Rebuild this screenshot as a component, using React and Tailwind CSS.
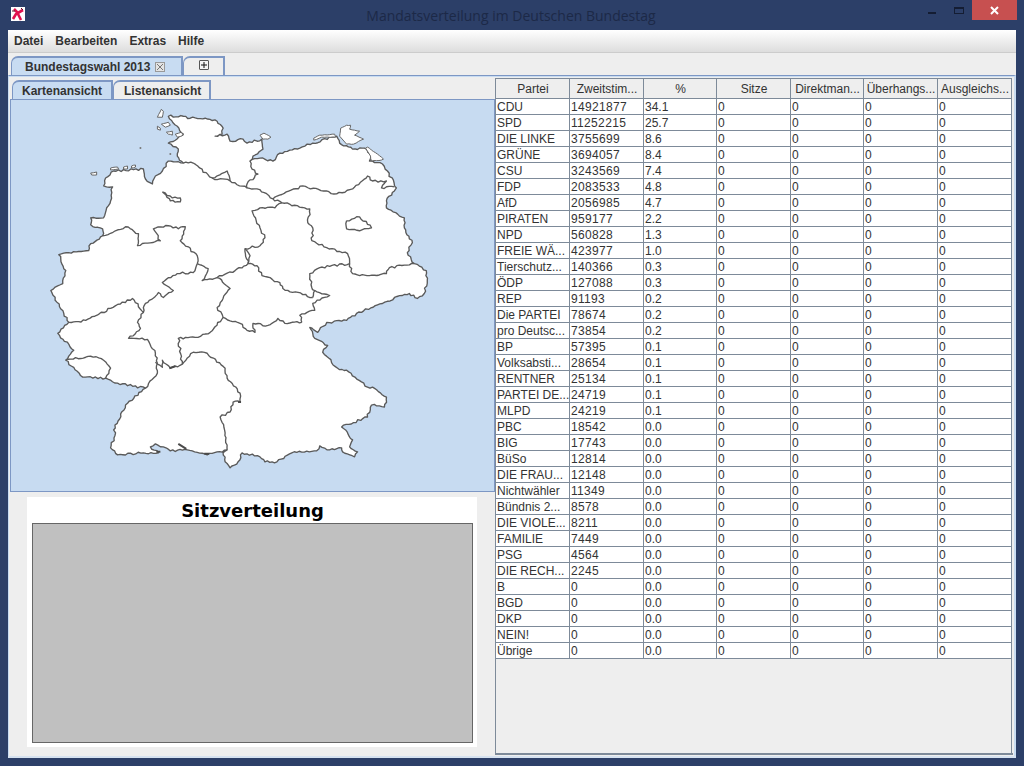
import React from "react";

const rows = [
  ["CDU","14921877","34.1"],["SPD","11252215","25.7"],["DIE LINKE","3755699","8.6"],["GRÜNE","3694057","8.4"],["CSU","3243569","7.4"],["FDP","2083533","4.8"],["AfD","2056985","4.7"],["PIRATEN","959177","2.2"],["NPD","560828","1.3"],["FREIE WÄ...","423977","1.0"],["Tierschutz...","140366","0.3"],["ÖDP","127088","0.3"],["REP","91193","0.2"],["Die PARTEI","78674","0.2"],["pro Deutsc...","73854","0.2"],["BP","57395","0.1"],["Volksabsti...","28654","0.1"],["RENTNER","25134","0.1"],["PARTEI DE...","24719","0.1"],["MLPD","24219","0.1"],["PBC","18542","0.0"],["BIG","17743","0.0"],["BüSo","12814","0.0"],["DIE FRAU...","12148","0.0"],["Nichtwähler","11349","0.0"],["Bündnis 2...","8578","0.0"],["DIE VIOLE...","8211","0.0"],["FAMILIE","7449","0.0"],["PSG","4564","0.0"],["DIE RECH...","2245","0.0"],["B","0","0.0"],["BGD","0","0.0"],["DKP","0","0.0"],["NEIN!","0","0.0"],["Übrige","0","0.0"],
];
const headers = ["Partei","Zweitstim...","%","Sitze","Direktman...","Überhangs...","Ausgleichs..."];
const GRID = "grid grid-cols-[74px_74px_73px_74px_73px_74px_74px]";

const outer = [[168,115],[183,115],[190,117],[205,117],[217,120],[223,127],[222,133],[215,135],[227,133],[230,140],[243,138],[247,142],[262,138],[263,148],[253,155],[250,160],[260,157],[273,160],[280,152],[300,147],[313,142],[337,135],[340,142],[353,148],[365,147],[372,155],[370,160],[383,163],[388,170],[397,187],[395,190],[387,200],[387,207],[405,217],[405,227],[413,242],[408,252],[415,263],[427,270],[428,280],[425,293],[418,298],[410,293],[403,295],[383,303],[357,313],[347,320],[327,322],[318,332],[310,327],[315,338],[328,345],[323,352],[338,368],[347,370],[368,387],[373,387],[387,397],[385,407],[372,405],[368,417],[342,427],[353,440],[350,447],[358,452],[355,457],[343,452],[342,448],[330,450],[320,446],[317,451],[292,453],[277,462],[265,462],[260,457],[247,454],[242,453],[238,462],[230,468],[225,462],[223,453],[227,450],[207,455],[187,450],[170,451],[163,447],[155,444],[150,447],[158,453],[143,453],[117,455],[110,448],[115,433],[113,430],[125,405],[145,388],[117,383],[105,378],[82,377],[65,360],[73,350],[57,333],[68,322],[63,313],[50,290],[62,283],[65,270],[58,254],[88,250],[90,243],[102,235],[102,228],[90,224],[90,217],[103,217],[110,200],[112,186],[103,185],[105,177],[113,170],[143,168],[145,178],[152,183],[155,175],[162,170],[168,160],[183,162],[177,155],[178,148],[168,142],[183,133],[177,125],[168,115]];

const inner = [
  [[183,162],[193,162],[212,177],[230,180],[247,187],[257,188],[273,198],[282,202]],
  [[212,177],[227,170],[230,180]],
  [[250,160],[252,168],[258,173],[247,183],[247,187]],
  [[273,198],[303,185],[337,193],[353,188],[368,175],[373,180],[387,180],[382,187],[395,186]],
  [[282,202],[275,207],[260,207],[252,210],[260,227],[265,237],[260,245],[245,248],[248,263],[257,265],[262,275],[280,282],[283,288],[313,297]],
  [[282,202],[310,208],[308,222],[313,227],[312,240],[327,247],[348,253],[350,263],[320,267],[310,273],[312,287],[315,290],[313,297]],
  [[350,263],[353,273],[370,275],[387,273],[390,267],[415,263]],
  [[315,290],[330,295],[313,303],[315,310],[300,315],[302,322]],
  [[248,263],[235,270],[217,277],[230,288],[222,300],[217,307],[223,317],[240,323],[247,330],[255,332],[253,323],[268,325],[278,318],[285,323],[302,322]],
  [[245,248],[250,255],[248,263]],
  [[197,263],[208,268],[202,280],[217,277]],
  [[102,235],[125,226],[138,233],[137,245],[160,240],[153,228],[168,225],[178,228],[185,226],[180,240],[197,255],[197,263],[193,272],[177,273],[162,282],[173,290],[163,297],[158,292],[145,303],[143,312],[132,298],[110,308],[85,320],[68,322]],
  [[143,312],[137,322],[140,328],[128,338],[147,339],[155,353],[157,363],[157,373],[145,388]],
  [[155,362],[162,367],[162,360],[170,368],[182,364],[178,338],[195,337],[210,332],[223,317]],
  [[182,364],[193,352],[207,353],[225,368],[227,378],[240,393],[240,402],[233,402],[230,412],[220,417],[225,433],[227,450]],
  [[65,360],[90,356],[103,360],[110,368],[105,378]],
  [[162,191],[172,197],[180,197],[180,201],[170,200],[162,191]],
  [[347,220],[360,216],[372,227],[360,230],[347,228],[347,220]],
];

const islands = [
  [[157,116],[161,108],[163,110],[162,116]],
  [[161,123],[168,121],[170,124],[165,126]],
  [[157,125],[160,127],[160,129],[157,128]],
  [[166,131],[172,130],[172,134],[168,133]],
  [[175,133],[181,131],[183,134],[177,136]],
  [[90,172],[96,171],[96,174],[91,174]],
  [[110,167],[117,166],[118,168],[110,169]],
  [[123,166],[127,165],[127,168],[123,168]],
  [[131,165],[135,164],[135,166],[131,167]],
  [[260,134],[264,132],[271,136],[268,138],[263,138]],
  [[314,137],[320,134],[335,133],[336,136],[322,136],[314,139]],
  [[340,135],[341,127],[347,124],[351,124],[350,128],[360,130],[355,134],[364,138],[354,143],[347,143]],
  [[366,147],[368,146],[378,153],[384,158],[382,159],[372,160],[371,155]],
];

function jag(points, amp = 1.15, step = 2.6) {
  const out = [];
  for (let i = 0; i < points.length - 1; i++) {
    const [x1, y1] = points[i];
    const [x2, y2] = points[i + 1];
    const len = Math.hypot(x2 - x1, y2 - y1);
    const n = Math.max(1, Math.round(len / step));
    const nx = -(y2 - y1) / (len || 1);
    const ny = (x2 - x1) / (len || 1);
    out.push([x1, y1]);
    for (let k = 1; k < n; k++) {
      const t = k / n;
      const s = Math.sin((x1 + t * (x2 - x1)) * 12.9898 + (y1 + t * (y2 - y1)) * 78.233) * 43758.5453;
      const d = ((s - Math.floor(s)) - 0.5) * 2 * amp;
      out.push([x1 + t * (x2 - x1) + nx * d, y1 + t * (y2 - y1) + ny * d]);
    }
  }
  out.push(points[points.length - 1]);
  return out.map((p) => p[0].toFixed(1) + " " + p[1].toFixed(1)).join(" L");
}

function GermanyMap() {
  return (
    <svg viewBox="10 99 485 392" className="block w-full h-full">
      <path d={"M" + jag(outer) + "Z"} fill="#ffffff" stroke="#5a5a5a" strokeWidth="1.35" strokeLinejoin="round" />
      {inner.map((s, i) => (
        <path key={i} d={"M" + jag(s)} fill="none" stroke="#5a5a5a" strokeWidth="1.35" strokeLinejoin="round" />
      ))}
      {islands.map((s, i) => (
        <path key={i} d={"M" + jag(s, 0.3) + "Z"} fill="#ffffff" stroke="#666666" strokeWidth="1" />
      ))}
      <path d="M169 368 L175 366 M156 452 L160 452 M204 454 L209 454 M178 444 L186 449 M238 402 L241 402" stroke="#4a4a4a" strokeWidth="2" fill="none" />
      <circle cx="140" cy="147" r="1" fill="#777777" />
      <circle cx="170" cy="153" r="1" fill="#777777" />
    </svg>
  );
}

function AppIcon() {
  return (
    <svg width="14" height="14" viewBox="0 0 14 14" className="block">
      <rect width="14" height="14" fill="#ffffff" />
      <path d="M3 2 L6 5 L10 13 M2 12 L5 7 L12 3" stroke="#e0114f" strokeWidth="2.6" fill="none" />
      <path d="M1 4 L4 4 M10 1 L12 3" stroke="#5a1a2a" strokeWidth="1" fill="none" />
    </svg>
  );
}

function Tab({ children, active, className }) {
  return (
    <div
      className={
        "flex items-center border-t-2 border-r-2 border-l border-[#7d97c4] rounded-tl-[7px] " +
        (active ? "bg-[#c8dcf2] " : "bg-[#eeeeee] ") +
        className
      }
    >
      {children}
    </div>
  );
}

export default function App() {
  return (
    <div className="w-[1024px] h-[766px] overflow-hidden flex flex-col bg-[#2c3f68] text-[12px] text-[#333333] font-['Liberation_Sans',Arial,sans-serif]">
      {/* title bar */}
      <div className="h-[30px] relative shrink-0 flex justify-center">
        <div className="absolute left-[11px] top-[7px]"><AppIcon /></div>
        <div className="pt-[6px] pr-[2px] text-[14px] leading-[20px] text-[#1c2947] font-['Open_Sans',sans-serif]">Mandatsverteilung im Deutschen Bundestag</div>
        <div className="absolute left-[928px] top-[12px] w-[8px] h-[2px] bg-[#141d33]" />
        <div className="absolute left-[954px] top-[7px] w-[10px] h-[7px] border border-t-2 border-[#141d33]" />
        <div className="absolute left-[972px] top-0 w-[45px] h-[20px] bg-[#c75050] flex items-center justify-center">
          <svg width="9" height="9" viewBox="0 0 9 9"><path d="M1 1 L8 8 M8 1 L1 8" stroke="#ffffff" strokeWidth="2" /></svg>
        </div>
      </div>

      {/* window body */}
      <div className="mx-[8px] h-[728px] bg-[#eeeeee] flex flex-col border-b-2 border-[#d6e2f0]">
        {/* menu */}
        <div className="h-[23px] shrink-0 flex items-center gap-[12px] pl-[6px] font-bold bg-gradient-to-b from-[#ffffff] to-[#dddddd] border-b border-[#cccccc]">
          <span>Datei</span><span>Bearbeiten</span><span>Extras</span><span>Hilfe</span>
        </div>
        {/* outer tabs */}
        <div className="h-[21px] shrink-0 flex items-end pl-[3px] mt-[1px]">
          <Tab active className="w-[172px] h-[19px] pl-[13px] gap-[5px] font-bold">
            <span>Bundestagswahl 2013</span>
            <span className="w-[10px] h-[10px] border border-[#999999] bg-[#e4e4e4] flex items-center justify-center">
              <svg width="8" height="8" viewBox="0 0 8 8"><path d="M1 1 L7 7 M7 1 L1 7" stroke="#777777" strokeWidth="1" /></svg>
            </span>
          </Tab>
          <Tab className="w-[42px] h-[19px] pl-[15px] pb-[3px]">
            <span className="w-[10px] h-[10px] border border-[#555555] bg-[#f4f4f4] rounded-[1px] flex items-center justify-center">
              <svg width="8" height="8" viewBox="0 0 8 8"><path d="M4 1 V7 M1 4 H7" stroke="#111111" strokeWidth="1" /></svg>
            </span>
          </Tab>
        </div>
        {/* tab content */}
        <div className="flex-1 flex border-t border-[#7d97c4] border-l border-r-2 border-l-[#c8dcf2] border-r-[#c8dcf2] pt-[1px] min-h-0 bg-[#eeeeee] relative">
          <div className="absolute left-0 right-0 top-0 h-[1px] bg-[#c8dcf2]" />
          {/* left pane */}
          <div className="w-[486px] shrink-0 flex flex-col pl-[1px]">
            <div className="h-[22px] shrink-0 flex items-end pl-[2px] pt-[3px] font-bold">
              <Tab active className="w-[101px] h-[19px] pl-[9px]">Kartenansicht</Tab>
              <Tab className="w-[98px] h-[19px] pl-[10px]">Listenansicht</Tab>
            </div>
            <div className="h-[393px] w-[485px] shrink-0 border border-[#7d97c4] bg-[#c7dbf1] overflow-hidden">
              <GermanyMap />
            </div>
            <div className="pl-[17px] pt-[5px]">
              <div className="w-[450px] h-[250px] bg-white flex flex-col items-center pl-[5px] pr-[4px]">
                <div className="h-[26px] leading-[28px] text-[18px] font-bold text-black font-['DejaVu_Sans',sans-serif]">Sitzverteilung</div>
                <div className="w-full h-[220px] bg-[#c0c0c0] border border-[#666666]" />
              </div>
            </div>
          </div>
          {/* table */}
          <div className="w-[518px] shrink-0 flex flex-col h-[677px] border-l border-[#7d8a99] border-b-2 border-b-[#7d8a99] mt-[1px]">
            <div className={GRID + " w-[516px] h-[21px] border-t border-[#7d8a99] shrink-0"}>
              {headers.map((h) => (
                <div key={h} className="border-r border-b border-[#7d8a99] text-center pl-[1px] leading-[21px] bg-[#eeeeee] whitespace-nowrap overflow-hidden">{h}</div>
              ))}
            </div>
            {rows.map((r) => (
              <div key={r[0]} className={GRID + " w-[516px] h-[16px] shrink-0 bg-white"}>
                {[r[0], r[1], r[2], "0", "0", "0", "0"].map((c, i) => (
                  <div key={i} className={"border-r border-b border-[#7d8a99] pl-[1px] leading-[17px] whitespace-nowrap overflow-hidden" + (i === 1 ? " tracking-[0.33px]" : "")}>{c}</div>
                ))}
              </div>
            ))}
            <div className="flex-1 w-[516px] border-r border-[#7d8a99]" />
          </div>
        </div>
      </div>
    </div>
  );
}
